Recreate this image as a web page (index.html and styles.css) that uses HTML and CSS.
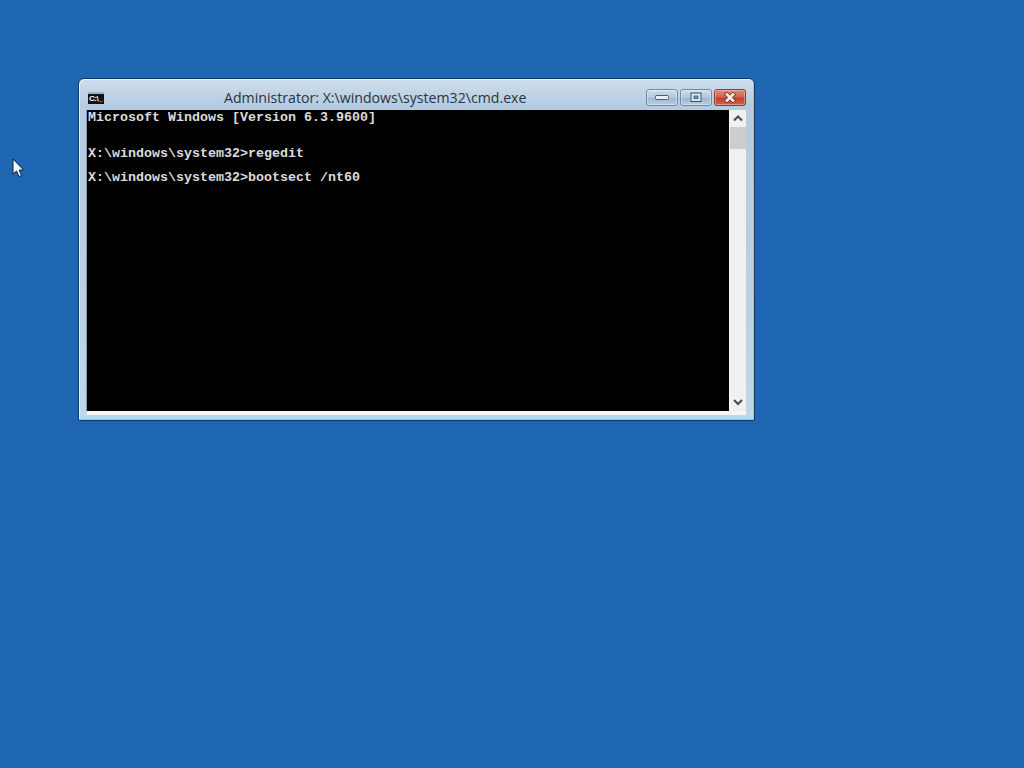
FILE: index.html
```html
<!DOCTYPE html>
<html lang="en">
<head>
<meta charset="utf-8">
<title>Administrator: X:\windows\system32\cmd.exe</title>
<link rel="stylesheet" href="styles.css">
</head>
<body>
<div class="window">
  <div class="titlebar">
    <div class="app-icon"><span>C:\_</span></div>
    <div class="title">Administrator: X:\windows\system32\cmd.exe</div>
    <div class="controls">
      <div class="btn">
        <svg width="16" height="8" viewBox="0 0 16 8"><rect x="1.500" y="1.500" width="13" height="4" rx="1" fill="#e8eef5" stroke="#3f5f80"/></svg>
      </div>
      <div class="btn">
        <svg width="14" height="11" viewBox="0 0 14 11"><rect x="2" y="1" width="10" height="8.500" fill="#dfe8f1" stroke="#33506e"/><rect x="5" y="4" width="4" height="2.500" fill="#7f9ab5" stroke="#33506e" stroke-width=".8"/></svg>
      </div>
      <div class="btn close">
        <svg width="14" height="11" viewBox="0 0 14 11"><path d="M2.500 1 L11.500 10 M11.500 1 L2.500 10" stroke="#5f2a25" stroke-width="4"/><path d="M3 1.500 L11 9.500 M11 1.500 L3 9.500" stroke="#f6eeea" stroke-width="2.600"/></svg>
      </div>
    </div>
  </div>
  <div class="client">
    <div class="client-row">
      <pre class="console">Microsoft Windows [Version 6.3.9600]


X:\windows\system32&gt;regedit

X:\windows\system32&gt;bootsect /nt60</pre>
      <div class="scrollbar">
        <svg class="arrow" width="16" height="17" viewBox="0 0 16 17"><path d="M4 10.500 L8 6.500 L12 10.500" fill="none" stroke="#4a4a4a" stroke-width="2"/></svg>
        <div class="thumb"></div>
        <div class="track"></div>
        <svg class="arrow" width="16" height="17" viewBox="0 0 16 17"><path d="M4 6 L8 10 L12 6" fill="none" stroke="#4a4a4a" stroke-width="2"/></svg>
      </div>
    </div>
  </div>
</div>
<svg class="cursor" width="13" height="20" viewBox="0 0 13 20"><path d="M1 1 L1 16 L4.500 13 L7 18.500 L9.500 17.500 L7.200 12 L11.500 12 Z" fill="#f4f7fa" stroke="#10233f" stroke-width="1"/></svg>
</body>
</html>
```

FILE: styles.css
```css
html, body {
  margin: 0;
  height: 100%;
  overflow: hidden;
  background: #1f66b2;
}
.window {
  position: absolute;
  left: 78px;
  top: 78px;
  width: 677px;
  height: 343px;
  box-sizing: border-box;
  padding: 1px 8px 5px;
  display: flex;
  flex-direction: column;
  border: 1px solid #17395f;
  border-radius: 6px 6px 2px 2px;
  background: linear-gradient(180deg, #cfdeec 0%, #b4cbe0 8%, #b9cfe4 60%, #bcd8ec 100%);
  box-shadow: inset 1px 1px 0 #e4eef7, inset -1px -1px 0 #8fd0ef, inset 0 -2px 0 #9fdcf5;
}
.titlebar {
  height: 30px;
  display: flex;
  align-items: flex-start;
  position: relative;
  flex: none;
}
.app-icon {
  width: 16px;
  height: 12px;
  margin: 12px 0 0 1px;
  background: #111;
  border-top: 2px solid #a9b2b8;
  box-sizing: border-box;
  overflow: hidden;
}
.app-icon span {
  display: block;
  font: bold 8px/9px "Liberation Sans", sans-serif;
  color: #fff;
  letter-spacing: -.5px;
  white-space: nowrap;
  padding-left: 1px;
}
.title {
  position: absolute;
  left: 137px;
  top: 9px;
  font: 14.150px/18px "Open Sans", "Liberation Sans", sans-serif;
  color: #2b3440;
  white-space: nowrap;
}
.controls {
  margin-left: auto;
  margin-top: 9px;
  display: flex;
  gap: 2px;
}
.btn {
  width: 32px;
  height: 17px;
  box-sizing: border-box;
  border: 1px solid #6f8aa6;
  border-radius: 3px;
  display: flex;
  align-items: center;
  justify-content: center;
  background: linear-gradient(180deg, #cfdeec 0%, #b2c7dc 50%, #9db5cd 52%, #bccfe2 100%);
  box-shadow: inset 0 0 0 1px rgba(255, 255, 255, .35);
}
.btn.close {
  border-color: #8c3b33;
  background: linear-gradient(180deg, #e0887a 0%, #d26452 48%, #c23e2a 52%, #d2604a 100%);
}
.client {
  flex: 1;
  min-height: 0;
  display: flex;
  flex-direction: column;
  background: #f4f6f8;
  padding-bottom: 4px;
}
.client-row {
  flex: 1;
  min-height: 0;
  display: flex;
}
.console {
  flex: 1;
  margin: 0;
  padding: 2px 0 0 1px;
  background: #000;
  color: #dcdcdc;
  font: bold 13.330px/12px "Liberation Mono", monospace;
  overflow: hidden;
  box-shadow: -1px 0 0 #8f97a0;
}
.scrollbar {
  width: 16px;
  margin-left: 1px;
  display: flex;
  flex-direction: column;
  background: #f0f0f0;
  flex: none;
}
.arrow { flex: none; display: block; }
.thumb {
  height: 22px;
  flex: none;
  background: #cdcdcd;
}
.track { flex: 1; }
.cursor {
  position: absolute;
  left: 12px;
  top: 158px;
}
```
